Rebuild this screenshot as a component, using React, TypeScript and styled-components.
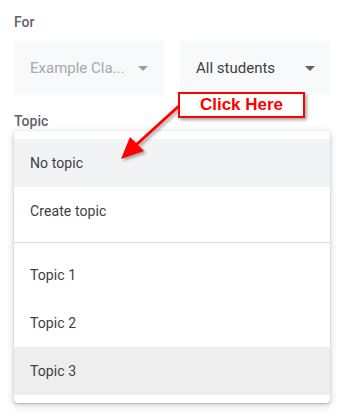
import React from "react";
import styled, { createGlobalStyle } from "styled-components";

const GlobalStyle = createGlobalStyle`
  html, body {
    margin: 0;
    padding: 0;
    background: #ffffff;
  }
  body {
    font-family: Roboto, "Liberation Sans", Arial, sans-serif;
  }
`;

const Page = styled.div`
  position: relative;
  width: 344px;
  height: 417px;
  padding: 0 14px;
  box-sizing: border-box;
  overflow: hidden;
`;

const Label = styled.div<{ $top: number }>`
  padding-top: ${(p) => p.$top}px;
  height: 18px;
  line-height: 18px;
  font-size: 14px;
  font-weight: 500;
  color: #5f6368;
`;

const SelectRow = styled.div`
  display: grid;
  grid-template-columns: 150px 150px;
  gap: 16px;
  margin-top: 10px;
`;

const Select = styled.div<{ $disabled?: boolean }>`
  display: flex;
  align-items: center;
  justify-content: space-between;
  height: 54px;
  padding: 0 16px;
  box-sizing: border-box;
  border-radius: 4px;
  background: #f8f9fa;
  font-size: 15px;
  color: ${(p) => (p.$disabled ? "#a5a8ac" : "#3c4043")};
`;

const Caret = styled.span<{ $disabled?: boolean }>`
  width: 0;
  height: 0;
  border-left: 5px solid transparent;
  border-right: 5px solid transparent;
  border-top: 5px solid ${(p) => (p.$disabled ? "#9aa0a6" : "#5f6368")};
  margin-right: ${(p) => (p.$disabled ? "0" : "-1px")};
`;

const Menu = styled.div`
  margin-top: 1px;
  padding: 8px 0;
  border-radius: 4px;
  background: #ffffff;
  box-shadow: 0 1px 2px rgba(60, 64, 67, 0.3), 0 2px 6px 2px rgba(60, 64, 67, 0.15);
`;

const Item = styled.div<{ $bg?: string }>`
  height: 48px;
  display: flex;
  align-items: center;
  padding: 0 16px;
  font-size: 14px;
  letter-spacing: 0.1px;
  color: #3c4043;
  background: ${(p) => p.$bg || "transparent"};
`;

const Divider = styled.div`
  height: 1px;
  margin: 7px 0 8px;
  background: #dadce0;
`;

const Callout = styled.div`
  position: absolute;
  left: 178px;
  top: 92px;
  width: 127px;
  height: 26px;
  box-sizing: border-box;
  border: 2px solid #ff0000;
  background: #ffffff;
  box-shadow: 2px 2px 3px rgba(0, 0, 0, 0.35);
  display: flex;
  align-items: center;
  justify-content: center;
  font-family: "Liberation Sans", Arial, sans-serif;
  font-weight: 700;
  font-size: 17px;
  color: #ff0000;
  z-index: 2;
`;

const ArrowLayer = styled.svg`
  position: absolute;
  left: 0;
  top: 0;
  pointer-events: none;
  z-index: 1;
`;

const topics = ["Topic 1", "Topic 2", "Topic 3"];

export default function App() {
  return (
    <>
      <GlobalStyle />
      <Page>
        <Label $top={13}>For</Label>
        <SelectRow>
          <Select $disabled>
            <span>Example Cla...</span>
            <Caret $disabled />
          </Select>
          <Select>
            <span>All students</span>
            <Caret />
          </Select>
        </SelectRow>
        <Label $top={17}>Topic</Label>
        <Menu>
          <Item $bg="#f1f3f4">No topic</Item>
          <Item>Create topic</Item>
          <Divider />
          {topics.map((t, i) => (
            <Item key={t} $bg={i === 2 ? "#eeeeee" : undefined}>
              {t}
            </Item>
          ))}
        </Menu>

        <Callout>Click Here</Callout>
        <ArrowLayer width="344" height="417" viewBox="0 0 344 417">
          <defs>
            <filter id="sh" x="-20%" y="-20%" width="150%" height="150%">
              <feDropShadow dx="2" dy="2" stdDeviation="1.5" floodColor="#000" floodOpacity="0.35" />
            </filter>
          </defs>
          <g filter="url(#sh)">
            <line x1="180" y1="105" x2="136" y2="145" stroke="#ff0000" strokeWidth="3" />
            <polygon points="121,159 130,137 144,151" fill="#ff0000" />
          </g>
        </ArrowLayer>
      </Page>
    </>
  );
}
